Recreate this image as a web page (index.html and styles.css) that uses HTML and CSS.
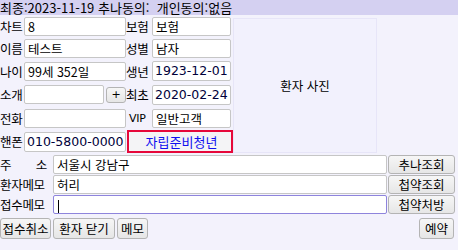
FILE: index.html
```html
<!DOCTYPE html>
<html lang="ko">
<head>
  <meta charset="UTF-8" />
  <title>접수</title>
  <link rel="stylesheet" href="styles.css">
</head>
<body>

  <!-- 상단 상태줄 -->
  <div class="status">최종:2023-11-19 추나동의:&nbsp; 개인동의:없음</div>

  <!-- 환자 기본정보 -->
  <div class="info">
    <div class="label">차트</div>
    <div class="field">8</div>
    <div class="label">보험</div>
    <div class="field">보험</div>
    <div class="photo">환자 사진</div>

    <div class="label">이름</div>
    <div class="field">테스트</div>
    <div class="label">성별</div>
    <div class="field">남자</div>

    <div class="label">나이</div>
    <div class="field">99세 352일</div>
    <div class="label">생년</div>
    <div class="field num">1923-12-01</div>

    <div class="label">소개</div>
    <div class="intro">
      <div class="field"></div>
      <button class="btn plus">+</button>
    </div>
    <div class="label">최초</div>
    <div class="field num">2020-02-24</div>

    <div class="label">전화</div>
    <div class="field"></div>
    <div class="label vip">VIP</div>
    <div class="field">일반고객</div>

    <div class="label">핸폰</div>
    <div class="field num">010-5800-0000</div>
    <button class="btn tag">자립준비청년</button>
  </div>

  <!-- 주소 / 메모 -->
  <div class="memo">
    <div class="label spread"><span>주</span><span>소</span></div>
    <div class="field">서울시 강남구</div>
    <button class="btn">추나조회</button>

    <div class="label">환자메모</div>
    <div class="field">허리</div>
    <button class="btn">첩약조회</button>

    <div class="label">접수메모</div>
    <div class="field focus"><span class="caret"></span></div>
    <button class="btn">첩약처방</button>
  </div>

  <!-- 하단 버튼 -->
  <div class="actions">
    <button class="btn">접수취소</button>
    <button class="btn">환자 닫기</button>
    <button class="btn">메모</button>
    <button class="btn reserve">예약</button>
  </div>

</body>
</html>
```

FILE: styles.css
```css
html, body {
  margin: 0;
  padding: 0;
  background: #f3f2fc;
  color: #000;
  font-family: "Noto Sans CJK KR", "Noto Sans", sans-serif;
  font-size: 12.5px;
  width: 458px;
  height: 250px;
  overflow: hidden;
}

.status {
  line-height: 15px;
  background: #d4d0f1;
  font-size: 13px;
  white-space: nowrap;
}

.info {
  display: grid;
  grid-template-columns: 24px 102px 26px 79px 146px;
  grid-template-rows: 22px 23px 22px 25px 23px 23px;
  align-items: center;
}

.memo {
  display: grid;
  grid-template-columns: 52px 334px 67px;
  grid-template-rows: 20px 20px 20px;
  column-gap: 1px;
  align-items: center;
  margin-top: 1px;
}

.label {
  line-height: 19px;
  white-space: nowrap;
  letter-spacing: -0.3px;
}

.label.vip {
  font-family: "DejaVu Sans", sans-serif;
  font-size: 11px;
  padding-left: 3px;
}

.label.spread {
  display: flex;
  justify-content: space-between;
  width: 47px;
}

.field {
  box-sizing: border-box;
  height: 19px;
  line-height: 17px;
  padding: 0 3px;
  background: #fff;
  border: 1px solid #c6c6c6;
  border-radius: 2px;
  white-space: nowrap;
  overflow: hidden;
}

.field.num {
  font-family: "DejaVu Sans", sans-serif;
  font-size: 12.5px;
  color: #00003a;
  height: 20px;
  line-height: 18px;
  padding-left: 2px;
}

.field.focus {
  border-color: #8e84dc;
}

.caret {
  display: inline-block;
  width: 1px;
  height: 13px;
  background: #000;
  vertical-align: middle;
  margin-left: 1px;
}

.photo {
  grid-column: 5;
  grid-row: 1 / span 6;
  align-self: stretch;
  margin: 3px 0 0 2px;
  display: flex;
  align-items: center;
  justify-content: center;
  background: #f2f1fd;
  border: 1px solid #e7e5f8;
  box-sizing: border-box;
}

.intro {
  display: flex;
  align-items: center;
  gap: 2px;
}

.intro .field {
  width: 80px;
}

.btn {
  box-sizing: border-box;
  height: 19px;
  padding: 0;
  font-family: inherit;
  font-size: 12.5px;
  line-height: 17px;
  color: #000;
  background: linear-gradient(#f6f6f6, #e6e6e6);
  border: 1px solid #b4b4b4;
  border-radius: 3px;
  white-space: nowrap;
  cursor: pointer;
}

.btn.plus {
  width: 20px;
  height: 16px;
  line-height: 13px;
  font-family: "DejaVu Sans", sans-serif;
  font-size: 11px;
}

.btn.tag {
  grid-column: 3 / span 2;
  width: 106px;
  height: 23px;
  margin-left: 1px;
  color: #1010f0;
  background: #f4f4f6;
  border: 2px solid #e6083a;
  border-radius: 0;
  padding-left: 3px;
  font-size: 13px;
}

.actions {
  display: flex;
  gap: 2px;
  margin-top: 4px;
  padding-right: 4px;
}

.actions .btn {
  height: 21px;
  padding: 0 1px;
}

.actions .btn:nth-child(1) { width: 51px; }
.actions .btn:nth-child(2) { width: 62px; }
.actions .btn:nth-child(3) { width: 31px; }

.btn.reserve {
  margin-left: auto;
  width: 35px;
}
```
